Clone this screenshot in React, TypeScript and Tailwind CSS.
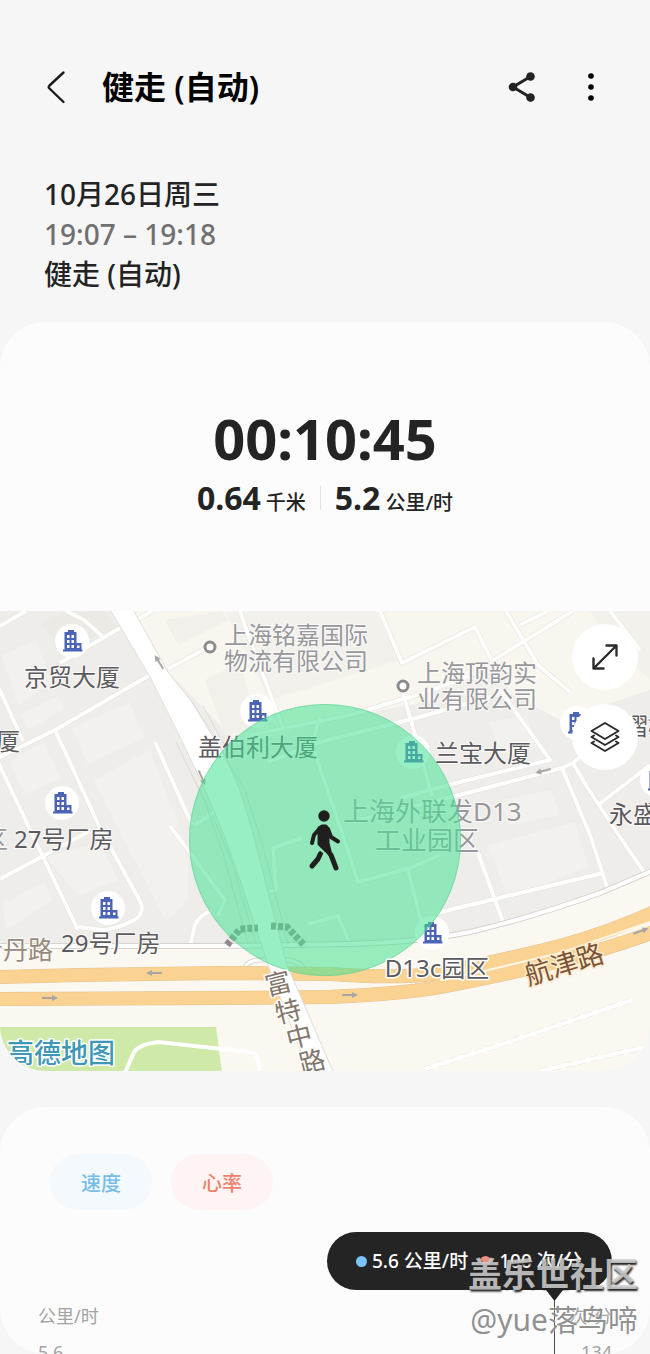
import React from "react";

const FONT = "font-['Noto_Sans','Noto_Sans_CJK_SC',sans-serif]";

type Point = { x: number; y: number };

const buildings: Point[] = [
  { x: 72, y: 641 },
  { x: 257, y: 711 },
  { x: 62, y: 803 },
  { x: 108, y: 908 },
  { x: 413, y: 752 },
  { x: 432, y: 933 },
  { x: 577, y: 723 },
  { x: 657, y: 780 },
];

const minorRoads = [
  "M-4 759 L55 730 L150 675",
  "M55 730 L100 828 L141 903 Q144 913 136 919 Q120 928 103 930 L79 927",
  "M-2 762 L35 840 L78 930",
  "M0 879 L90 831",
  "M155 742 L192 825",
  "M-2 686 L23 741",
  "M66 611 L84 620 L102 636",
  "M60 663 L120 628",
  "M133 622 L152 611",
  "M168 669 L212 645",
  "M0 626 L26 611",
  "M190 946 L195 925 Q200 914 212 911",
  "M240 611 L250 640 L283 728",
  "M380 611 L402 663 L475 627 L492 661",
  "M492 661 L573 611",
  "M506 611 L538 665 L570 692 M610 611 L640 650",
  "M520 625 L548 611",
  "M250 735 L350 715 L420 694 L470 676",
  "M268 762 L320 742 L420 717 L500 694",
  "M402 690 L418 745 L432 796",
  "M500 690 L550 760 L460 782 L400 798",
  "M573 763 L562 768 L467 793 L360 820",
  "M562 768 L590 835 L608 890",
  "M600 740 L573 763 L587 787 L620 837 L646 875",
  "M598 805 L650 765",
  "M477 850 L503 922",
  "M437 913 L603 873",
  "M320 716 L312 745 L335 812 L345 842 L358 882 L410 868 L440 855",
  "M408 870 L422 925",
  "M302 838 L273 848 L276 890 L270 891",
  "M308 924 L338 916 L350 944",
  "M195 825 L214 812 M170 826 L225 900 L218 916",
];

const dottedPaths = ["M425 1069 L500 1045 L632 1000", "M540 1071 L650 1046"];

const blocks = [
  "M2 656 L35 640 L52 680 L18 706 Z",
  "M20 715 L58 696 L64 708 L28 730 Z",
  "M72 728 L130 702 L144 738 L88 764 Z",
  "M94 780 L150 750 L188 850 L188 900 L166 922 Z",
  "M8 762 L44 742 L60 778 L26 794 Z",
  "M46 857 L100 842 L118 880 L78 896 Z",
  "M2 905 L44 882 L52 900 L6 930 Z",
  "M488 845 L575 822 L588 866 L508 900 Z",
  "M490 722 L526 715 L536 745 L500 755 Z",
  "M500 800 L552 790 L560 815 L510 825 Z",
];

const dark = "#5b5a5f";
const muted = "#98989c";

const labels: { text: string; x: number; y: number; fill: string; size?: number }[] = [
  { text: "京贸大厦", x: 24, y: 686, fill: dark },
  { text: "厦", x: -4, y: 750, fill: dark },
  { text: "上海铭嘉国际", x: 224, y: 644, fill: muted },
  { text: "物流有限公司", x: 224, y: 670, fill: muted },
  { text: "上海顶韵实", x: 417, y: 682, fill: muted },
  { text: "业有限公司", x: 417, y: 708, fill: muted },
  { text: "盖伯利大厦", x: 198, y: 756, fill: dark },
  { text: "兰宝大厦", x: 435, y: 762, fill: dark },
  { text: "上海外联发D13", x: 343, y: 821, fill: muted, size: 26 },
  { text: "工业园区", x: 375, y: 850, fill: muted, size: 26 },
  { text: "区", x: -16, y: 848, fill: muted },
  { text: "27号厂房", x: 14, y: 848, fill: dark },
  { text: "29号厂房", x: 61, y: 952, fill: dark },
  { text: "熠柏", x: 624, y: 735, fill: dark },
  { text: "永盛", x: 609, y: 823, fill: dark },
  { text: "青丹路", x: -22, y: 959, fill: "#978a7c", size: 25 },
];

const roadLetters = [
  { text: "富", x: 278, y: 983 },
  { text: "特", x: 288, y: 1011 },
  { text: "中", x: 299, y: 1036 },
  { text: "路", x: 312, y: 1061 },
];

const arrows = [
  { x: 154, y: 973, turn: 180 },
  { x: 50, y: 998, turn: 0 },
  { x: 350, y: 995, turn: 0 },
  { x: 543, y: 771, turn: 166 },
  { x: 641, y: 931, turn: -20 },
  { x: 159, y: 662, turn: -122 },
  { x: 202, y: 778, turn: 66 },
];

function Building({ x, y }: Point) {
  return (
    <g transform={`translate(${x} ${y})`}>
      <circle r="17" fill="#fff" />
      <path
        d="M-4 -11 H2 V-9 H4.500 V2 H9.500 V8.500 H10.500 V10.500 H-9 V8.500 H-7.500 V-9 H-4 Z"
        fill="#4c64b5"
      />
      <path
        d="M-5 -6 h2.500 v3 h-2.500 z M-0.500 -6 h2.500 v3 h-2.500 z M-5 -1 h2.500 v3 h-2.500 z M-0.500 -1 h2.500 v3 h-2.500 z M-5 4 h2.500 v3 h-2.500 z M-0.500 4 h2.500 v3 h-2.500 z M5 4.500 h2.500 v2.500 h-2.500 z"
        fill="#fff"
      />
    </g>
  );
}

const upperRoad = "M-4 977 L80 975 L220 973 L330 974 Q400 979 440 973 Q500 961 560 946 Q610 932 654 912";
const lowerRoad = "M-4 999 L220 998 L330 997 Q400 994 440 987 Q500 976 560 961 Q610 948 654 932";
const localRoad = "M-4 946 L220 946 L350 944 Q420 942 470 932 Q530 918 600 893 L654 870";
const mainRoad =
  "M108 606 H131 L168 672 L192 702 L220 745 L240 790 L252 830 L270 900 L287 965 L335 1076 H310 L268 965 L240 880 L222 830 L203 785 L180 737 L150 677 Z";

function MapDrawing() {
  return (
    <svg
      className={`block size-full ${FONT}`}
      viewBox="0 611 650 460"
      preserveAspectRatio="xMidYMid slice"
      role="img"
      aria-label="地图"
    >
      <rect x="-400" y="600" width="1450" height="490" fill="#efedea" />
      <path d="M131 611 H570 L650 611 V690 L560 720 L500 688 L330 720 L240 745 L168 672 Z" fill="#f9f6ef" />
      <path d="M225 611 H375 L400 660 L270 700 L245 650 Z M590 611 H650 V680 L610 640 Z" fill="#f3f1ec" />
      <path d="M165 620 L222 611 L228 620 L178 645 Z M205 680 L240 662 L258 730 L225 735 Z M430 690 L500 665 L510 690 L430 705 Z" fill="#f2f0eb" />
      <path d="M42 624 L68 611 L105 611 L118 628 L60 650 Z" fill="#ebeae4" />
      <g fill="#f3f1ed">
        {blocks.map((d) => (
          <path key={d} d={d} />
        ))}
      </g>
      <path d="M-4 946 H350 Q470 938 600 893 L654 870 V1080 H-4 Z" fill="#fbf8f2" />

      <g fill="none" strokeLinejoin="round">
        {minorRoads.map((d) => (
          <path key={d} d={d} stroke="#e3e0dc" strokeWidth="5" />
        ))}
        {minorRoads.map((d) => (
          <path key={d} d={d} stroke="#fefefd" strokeWidth="4" />
        ))}
        <path d={localRoad} stroke="#d5d2ce" strokeWidth="6" />
        <path d={localRoad} stroke="#fff" strokeWidth="4" />
        <path d="M245 967 Q250 959 262 960 H288 Q300 961 305 970" stroke="#dad6d0" strokeWidth="5" />
        <path d="M245 967 Q250 959 262 960 H288 Q300 961 305 970" stroke="#fff" strokeWidth="3" />
        {[upperRoad, lowerRoad].map((d) => (
          <path key={d} d={d} stroke="#e4c290" strokeWidth="14" />
        ))}
        {[upperRoad, lowerRoad].map((d) => (
          <path key={d} d={d} stroke="#fad291" strokeWidth="13" />
        ))}
      </g>
      <path d="M440 980 L480 972 L560 953 L650 922" fill="none" stroke="#fff6e2" strokeWidth="2" />

      <path d="M0 1027 H216 L222 1073 H0 Z" fill="#cfe9a8" />
      <path
        d="M125 1073 L134 1052 Q140 1044 158 1042 L222 1049 L250 1052 Q260 1053 259 1073"
        fill="none"
        stroke="#fff"
        strokeWidth="4"
      />
      {dottedPaths.map((d) => (
        <g key={d} fill="none">
          <path d={d} stroke="#e6e3de" strokeWidth="5" strokeDasharray="8 5" />
          <path d={d} stroke="#fff" strokeWidth="4" />
        </g>
      ))}

      <path d={mainRoad} fill="#fff" stroke="#e2dcd9" strokeWidth="1" />
      <path
        d="M176 742 L204 800 L222 850 L248 944 M192 775 L212 815 L232 862 L256 944 M192 702 L245 790 L264 850 L288 944 M203 706 L226 748"
        fill="none"
        stroke="#dedad7"
        strokeWidth="1"
      />
      <g fill="none" stroke="#8e8d8b" strokeWidth="7" strokeDasharray="5 2">
        <path d="M227 945 L240 929 L258 928" />
        <path d="M271 926 L287 927 L305 946" />
      </g>

      <g fill="none" stroke="#a8a5a3" strokeWidth="2">
        {arrows.map((a) => (
          <g key={`${a.x}-${a.y}`} transform={`translate(${a.x} ${a.y}) rotate(${a.turn})`}>
            <path d="M-8 0 H4" />
            <path d="M2 -3 L8 0 L2 3 Z" fill="#a8a5a3" stroke="none" />
          </g>
        ))}
      </g>

      {buildings.map((b) => (
        <Building key={`${b.x}-${b.y}`} {...b} />
      ))}
      <g fill="#fff" stroke="#8b8b8d" strokeWidth="3">
        <circle cx="210" cy="647" r="5" />
        <circle cx="403" cy="686" r="5" />
      </g>

      <g stroke="#fbfaf8" strokeWidth="2" paintOrder="stroke" strokeLinejoin="round">
        {labels.map((l) => (
          <text key={l.text + l.y} x={l.x} y={l.y} fill={l.fill} fontSize={l.size ?? 24}>
            {l.text}
          </text>
        ))}
      </g>

      <circle cx="325" cy="840" r="136" fill="#45e294" fillOpacity="0.55" />
      <circle cx="325" cy="840" r="135.500" fill="none" stroke="#5fcb93" strokeOpacity="0.5" strokeWidth="1" />

      <g stroke="#fff" strokeWidth="3" paintOrder="stroke" strokeLinejoin="round" textAnchor="middle">
        <text x="437" y="977" fill={dark} fontSize="24">
          D13c园区
        </text>
        {roadLetters.map((l) => (
          <text
            key={l.text}
            fill="#83776c"
            fontSize="26"
            transform={`translate(${l.x} ${l.y}) rotate(-14)`}
            y="10"
          >
            {l.text}
          </text>
        ))}
        <text
          fill="#7b553a"
          stroke="#fdebc9"
          fontSize="27"
          transform="translate(564 964) rotate(-17)"
          y="10"
        >
          航津路
        </text>
        <text x="61" y="1063" fill="#3f97b6" fontSize="27" fontWeight="500">
          高德地图
        </text>
      </g>

      <g stroke="#1f1f1f" fill="none" strokeLinecap="round" strokeLinejoin="round">
        <circle cx="324" cy="816" r="5.700" fill="#1f1f1f" stroke="none" />
        <path d="M319 828 L322 826 H326 L328 829 L328 843 L330 851 L326 851 L319 844 Z" fill="#1f1f1f" strokeWidth="3" />
        <path d="M320 828 L314 835 L312 843" strokeWidth="4" />
        <path d="M328 829 L331 837 L338 841.500" strokeWidth="4" />
        <path d="M323 845 L331 855 L336 868" strokeWidth="5" />
        <path d="M320.500 853.500 L318 859 L312 866" strokeWidth="5" />
        <path d="M317.500 848 L323.500 852.500" stroke="#93e8b9" strokeWidth="1.200" />
      </g>
    </svg>
  );
}

function Header() {
  return (
    <header className="flex h-14 shrink-0 items-center pr-9 pl-9 text-black">
      <button type="button" aria-label="返回" className="flex h-14 w-10 items-center justify-center">
        <svg className="h-9 w-5" viewBox="0 0 20 36" fill="none" stroke="#1c1c1c" strokeWidth="2.400" strokeLinecap="round" strokeLinejoin="round">
          <path d="M17.500 3.500 L3.500 16.500 Q2 18 3.500 19.500 L17.500 33" />
        </svg>
      </button>
      <h1 className="ml-[26px] flex-1 text-[32px] leading-10 font-semibold">健走 (自动)</h1>
      <button type="button" aria-label="分享" className="flex size-12 items-center justify-center">
        <svg className="size-8" viewBox="0 0 32 32" stroke="#222" fill="#222">
          <path d="M24.500 5.500 L7 16 L24.500 26.500" fill="none" strokeWidth="3" />
          <g stroke="none">
            <circle cx="24.500" cy="5.500" r="4.300" />
            <circle cx="7" cy="16" r="4.300" />
            <circle cx="24.500" cy="26.500" r="4.300" />
          </g>
        </svg>
      </button>
      <button type="button" aria-label="更多选项" className="ml-5 flex size-12 items-center justify-center">
        <svg className="size-8" viewBox="0 0 32 32" fill="#000">
          <circle cx="17" cy="5" r="2.800" />
          <circle cx="17" cy="16" r="2.800" />
          <circle cx="17" cy="27" r="2.800" />
        </svg>
      </button>
    </header>
  );
}

function Summary() {
  return (
    <section className="flex h-[289px] flex-col items-center pt-20 text-[#242424]">
      <p className="text-[56px] leading-[72px] font-bold">00:10:45</p>
      <div className="flex h-12 items-center">
        <p className="flex items-baseline gap-[5px]">
          <span className="text-[32px] leading-10 font-bold">0.64</span>
          <span className="text-xl font-medium">千米</span>
        </p>
        <span className="mx-[14px] h-6 w-px bg-[#e4e4e4]" />
        <p className="flex items-baseline gap-[5px]">
          <span className="text-[32px] leading-10 font-bold">5.2</span>
          <span className="text-xl font-medium">公里/时</span>
        </p>
      </div>
    </section>
  );
}

function MapPanel() {
  const round = "flex size-[66px] items-center justify-center rounded-full bg-white";
  return (
    <section className="relative h-[460px] overflow-hidden rounded-b-[46px]">
      <MapDrawing />
      <div className="absolute top-[13px] right-3 flex flex-col gap-[14px]">
        <button type="button" aria-label="展开地图" className={round}>
          <svg className="size-8" viewBox="0 0 32 32" fill="none" stroke="#2b2b2b" strokeWidth="2.400" strokeLinecap="round" strokeLinejoin="round">
            <path d="M4.500 27.500 L27.500 4.500 M17.500 4.500 H27.500 V14.500 M4.500 17.500 V27.500 H14.500" />
          </svg>
        </button>
        <button type="button" aria-label="地图图层" className={round}>
          <svg className="size-8" viewBox="0 0 32 32" fill="none" stroke="#2b2b2b" strokeWidth="2" strokeLinecap="round" strokeLinejoin="round">
            <path d="M16 2 L29.500 10 L16 18 L2.500 10 Z" />
            <path d="M5 14.500 L2.500 16 L16 24 L29.500 16 L27 14.500" />
            <path d="M5 20.500 L2.500 22 L16 30 L29.500 22 L27 20.500" />
          </svg>
        </button>
      </div>
    </section>
  );
}

function ChartCard() {
  const pill = "h-14 rounded-full px-[31px] pt-[3px] text-xl font-medium";
  return (
    <section className="relative mt-9 min-h-0 flex-1 overflow-hidden rounded-[46px] bg-[#fcfcfc] pt-[47px]">
      <div className="flex gap-[19px] pl-[50px]">
        <button type="button" className={`${pill} bg-[#f4f9fd] text-[#76bdeb]`}>
          速度
        </button>
        <button type="button" className={`${pill} bg-[#fef4f3] text-[#ef826d]`}>
          心率
        </button>
      </div>
      <div className="mt-[22px] flex justify-end pr-[38px]">
        <div className="relative flex h-[58px] items-center rounded-full bg-[#242424] pr-[30px] pl-[29px] text-[19px] font-medium text-white">
          <span className="mr-[5px] size-[11px] rounded-full bg-[#7cc4f8]" />
          <span>5.6 公里/时</span>
          <span className="mr-2 ml-3 size-[11px] rounded-full bg-[#ee9184]" />
          <span>100 次/分</span>
          <span className="absolute top-full right-[57px] h-16 w-px bg-[#4a4a4a]" />
          <svg className="absolute top-full right-[49px] h-[11px] w-[17px]" viewBox="0 0 17 11" fill="#242424">
            <path d="M0 0 H17 L8.500 11 Z" />
          </svg>
        </div>
      </div>
      <div className="mt-2 flex justify-between px-[38px] text-lg leading-9 text-[#a3a3a3]">
        <div>
          <p>公里/时</p>
          <p>5.6</p>
        </div>
        <div className="text-right">
          <p>次/分</p>
          <p>134</p>
        </div>
      </div>
    </section>
  );
}

function Watermark() {
  return (
    <div className="pointer-events-none absolute right-3 bottom-3 text-right">
      <p className="text-[34px] leading-[48px] font-bold text-[#d2d2d2]/85 [text-shadow:1px_2px_2px_#222]">盖乐世社区</p>
      <p className="text-[30px] leading-[44px] text-[#7d7d7d]/85 [text-shadow:0_0_2px_#fff]">@yue落鸟啼</p>
    </div>
  );
}

export default function App() {
  return (
    <main className={`relative flex h-screen flex-col overflow-hidden bg-[#f6f6f6] pt-[59px] ${FONT}`} lang="zh-CN">
      <Header />
      <div className="mt-[59px] shrink-0 px-11 text-[28px] leading-10 font-medium text-[#232323]">
        <p>10月26日周三</p>
        <p className="text-[#707070]">19:07 – 19:18</p>
        <p>健走 (自动)</p>
      </div>
      <article className="mt-7 shrink-0 rounded-[46px] bg-[#fcfcfc]">
        <Summary />
        <MapPanel />
      </article>
      <ChartCard />
      <Watermark />
    </main>
  );
}
